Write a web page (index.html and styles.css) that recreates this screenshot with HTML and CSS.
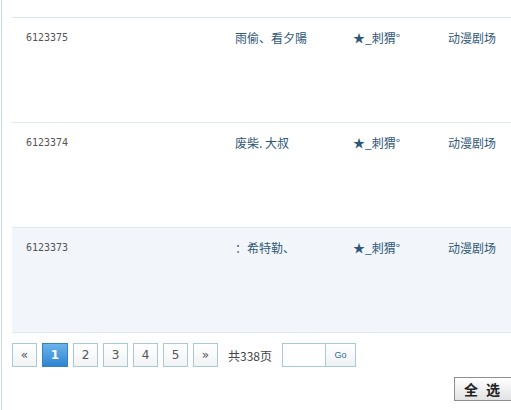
FILE: index.html
```html
<!DOCTYPE html>
<html lang="zh">

<head>
    <meta charset="utf-8">
    <title>列表</title>
    <link rel="stylesheet" href="styles.css">
</head>

<body>
    <div class="wrap">
        <table class="liste">
            <tr class="top">
                <td class="id"></td>
                <td class="navn"></td>
                <td class="bruger"></td>
                <td class="kat"></td>
            </tr>
            <tr>
                <td class="id">6123375</td>
                <td class="navn">雨偷、看夕陽</td>
                <td class="bruger">★_刺猬°</td>
                <td class="kat">动漫剧场</td>
            </tr>
            <tr>
                <td class="id">6123374</td>
                <td class="navn">废柴. 大叔</td>
                <td class="bruger">★_刺猬°</td>
                <td class="kat">动漫剧场</td>
            </tr>
            <tr class="hover">
                <td class="id">6123373</td>
                <td class="navn">：希特勒、</td>
                <td class="bruger">★_刺猬°</td>
                <td class="kat">动漫剧场</td>
            </tr>
        </table>

        <div class="pager">
            <a class="side">«</a>
            <a class="side valgt">1</a>
            <a class="side">2</a>
            <a class="side">3</a>
            <a class="side">4</a>
            <a class="side">5</a>
            <a class="side">»</a>
            <span class="total">共338页</span>
            <span class="goto"><input type="text"><button>Go</button></span>
        </div>

        <div class="bund">
            <button class="alle">全选</button>
        </div>
    </div>
</body>

</html>
```

FILE: styles.css
```css
body {
    margin: 0;
    padding-left: 1px;
    background-color: #fff;
    font-family: "DejaVu Sans", "Noto Sans CJK SC", sans-serif;
    font-size: 12px;
    overflow: hidden;
}

.wrap {
    border-left: 1px solid #c6dbe6;
    padding-left: 10px;
    height: 410px;
    width: 600px;
}

.liste {
    border-collapse: collapse;
    width: 590px;
}

.liste td {
    border-bottom: 1px solid #dfe8ee;
    height: 92px;
    vertical-align: top;
    padding: 12px 0 0 0;
    color: #2f5878;
    font-family: "Noto Sans CJK SC", sans-serif;
    font-size: 12px;
    line-height: 16px;
}

.liste tr.top td {
    height: 17px;
    padding: 0;
}

.liste tr.hover td {
    background-color: #f2f6fa;
}

.liste td.id {
    width: 209px;
    padding-left: 14px;
    color: #555;
    font-family: "DejaVu Sans Mono", monospace;
    font-size: 10px;
}

.liste td.navn {
    width: 118px;
}

.liste td.bruger {
    width: 95px;
}

.pager {
    display: flex;
    align-items: center;
    margin-top: 10px;
    height: 24px;
}

.side {
    box-sizing: border-box;
    width: 25px;
    height: 24px;
    margin-right: 5px;
    border: 1px solid #a8cad7;
    background: linear-gradient(#ffffff, #f1f3f4);
    color: #555;
    font-size: 12px;
    line-height: 22px;
    text-align: center;
}

.side.valgt {
    width: 26px;
    border-color: #3a80be;
    background: linear-gradient(#6bb4ec, #2e85d2);
    color: #fff;
    font-weight: bold;
}

.total {
    margin-left: 5px;
    color: #444;
    font-family: "Noto Sans CJK SC", sans-serif;
    font-size: 12px;
}

.goto {
    display: flex;
    margin-left: 10px;
}

.goto input {
    box-sizing: border-box;
    width: 43px;
    height: 24px;
    margin: 0;
    border: 1px solid #a8cad7;
    border-right: none;
    padding: 0;
}

.goto button {
    box-sizing: border-box;
    width: 31px;
    height: 24px;
    margin: 0;
    border: 1px solid #a8cad7;
    background: linear-gradient(#ffffff, #eef1f3);
    color: #2e6e9a;
    font-size: 9px;
    padding: 0;
}

.bund {
    display: flex;
    justify-content: flex-end;
    margin-top: 10px;
    width: 500px;
}

.alle {
    box-sizing: border-box;
    width: 58px;
    height: 24px;
    border: 1px solid #8e8e8e;
    border-right: none;
    background: linear-gradient(#ffffff, #e2e2e2);
    color: #222;
    font-family: "Noto Sans CJK SC", sans-serif;
    font-size: 14px;
    font-weight: bold;
    letter-spacing: 8px;
    white-space: nowrap;
    text-align: left;
    padding: 0 0 0 9px;
}
```
